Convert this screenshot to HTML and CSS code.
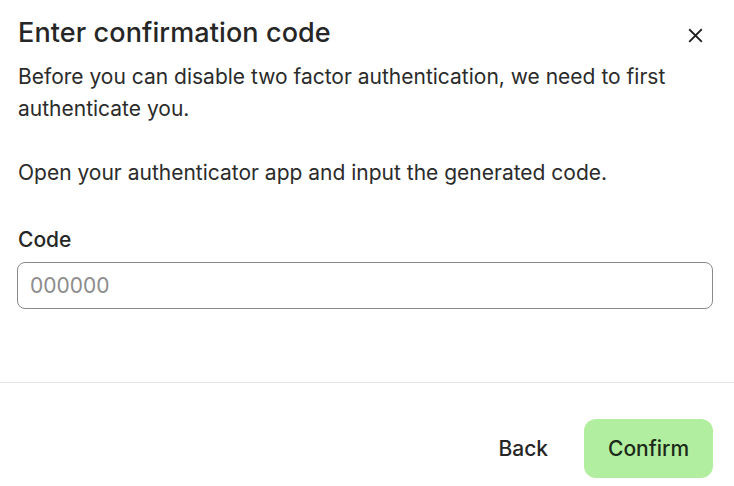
FILE: index.html
```html
<!DOCTYPE html>
<html lang="en">
<head>
<meta charset="utf-8">
<title>Enter confirmation code</title>
<link rel="stylesheet" href="styles.css">
</head>
<body>
<div class="dialog">
  <div class="dialog-body">
    <header class="dialog-header">
      <h2 class="dialog-title">Enter confirmation code</h2>
      <button class="close-btn" aria-label="Close">
        <svg width="16" height="16" viewBox="0 0 16 16" aria-hidden="true">
          <path d="M2 2 L14 14 M14 2 L2 14" stroke="#1f1f1f" stroke-width="2" stroke-linecap="square" fill="none"/>
        </svg>
      </button>
    </header>
    <p class="text">Before you can disable two factor authentication, we need to first authenticate you.</p>
    <p class="text text-gap">Open your authenticator app and input the generated code.</p>
    <label class="field-label" for="code">Code</label>
    <input class="field-input" id="code" type="text" placeholder="000000">
  </div>
  <footer class="dialog-footer">
    <button class="btn btn-ghost">Back</button>
    <button class="btn btn-primary">Confirm</button>
  </footer>
</div>
</body>
</html>
```

FILE: styles.css
```css
* { box-sizing: border-box; }
html, body { margin: 0; padding: 0; background: #ffffff; }
body {
  font-family: Inter, "Noto Sans", sans-serif;
  color: #2b2b2b;
  width: 734px;
  height: 486px;
  overflow: hidden;
}
.dialog { display: flex; flex-direction: column; }
.dialog-body {
  padding: 17px 21px 73px 17px;
  display: flex;
  flex-direction: column;
}
.dialog-header {
  display: flex;
  align-items: center;
  justify-content: space-between;
  height: 32px;
  margin-bottom: 12px;
}
.dialog-title {
  margin: 0 0 0 1px;
  font-size: 27px;
  line-height: 32px;
  font-weight: 450;
  letter-spacing: 0.1px;
  color: #262626;
}
.close-btn {
  width: 36px;
  height: 36px;
  border: 0;
  background: transparent;
  padding: 0;
  display: flex;
  align-items: center;
  justify-content: center;
  margin-top: 4px;
}
.close-btn svg { width: 15px; height: 15px; }
.text {
  margin: 0 0 0 1px;
  font-size: 21px;
  line-height: 32px;
  color: #2b2b2b;
}
.text-gap { margin-top: 32px; }
.field-label {
  margin: 35px 0 0 1px;
  font-size: 21px;
  line-height: 32px;
  font-weight: 500;
  color: #262626;
}
.field-input {
  margin-top: 6px;
  height: 47px;
  border: 1px solid #8a8a8a;
  border-radius: 8px;
  padding: 0 12px;
  font-family: inherit;
  font-size: 21px;
  color: #2b2b2b;
  outline: none;
}
.field-input::placeholder { color: #8c8c8c; }
.dialog-footer {
  border-top: 1px solid #e6e6e6;
  padding: 36px 21px 0 17px;
  display: flex;
  justify-content: flex-end;
  gap: 12px;
}
.btn {
  font-family: inherit;
  font-size: 21px;
  font-weight: 500;
  border: 0;
  height: 59px;
  border-radius: 12px;
  cursor: pointer;
}
.btn-ghost {
  background: transparent;
  color: #262626;
  padding: 0 24px;
}
.btn-primary {
  background: #b2ee9f;
  color: #1c2a1a;
  padding: 0 24px;
  width: 129px;
}
```
